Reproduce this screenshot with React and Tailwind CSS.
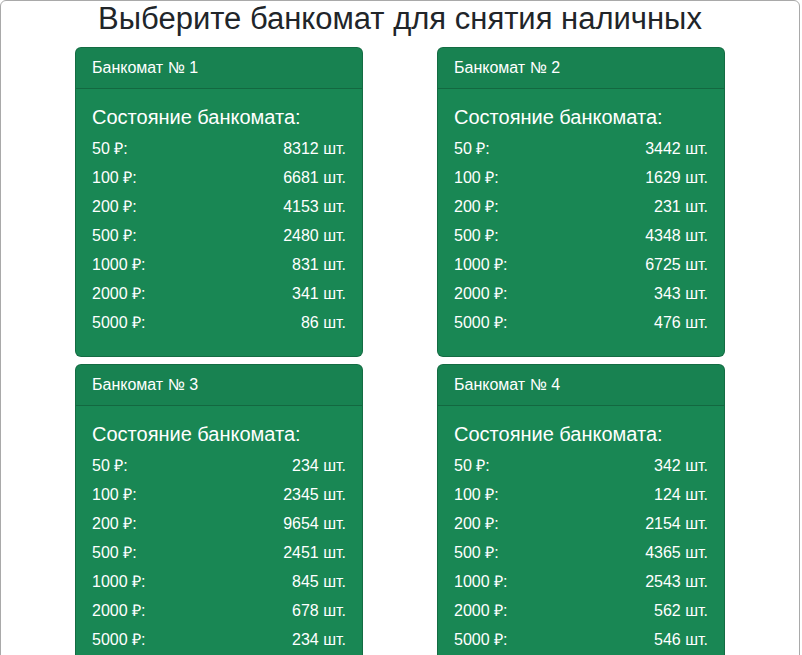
const atms = [
  { id: 1, notes: [8312, 6681, 4153, 2480, 831, 341, 86] },
  { id: 2, notes: [3442, 1629, 231, 4348, 6725, 343, 476] },
  { id: 3, notes: [234, 2345, 9654, 2451, 845, 678, 234] },
  { id: 4, notes: [342, 124, 2154, 4365, 2543, 562, 546] },
];

const nominals = [50, 100, 200, 500, 1000, 2000, 5000];

const AtmCard = ({ atm }) => (
  <div className="rounded-md border border-black/20 bg-[#198754] text-white overflow-hidden">
    {/* Header */}
    <div className="px-4 py-2 bg-black/[0.03] border-b border-black/20 text-base leading-6">
      Банкомат № {atm.id}
    </div>

    {/* Body */}
    <div className="p-4">
      <h5 className="text-[20px] leading-6 mb-2">Состояние банкомата:</h5>
      {nominals.map((n, i) => (
        <div key={n} className="flex justify-between text-base leading-6 mb-[5px]">
          <span>{n} ₽:</span>
          <span>{atm.notes[i]} шт.</span>
        </div>
      ))}
    </div>
  </div>
);

export default function App() {
  return (
    <div className="w-[800px] min-h-screen border border-[#a9a9a9] rounded-t-md bg-white font-['Liberation_Sans',Arial,sans-serif] text-[#212529]">
      <h1 className="text-[31px] leading-[36px] text-center mb-[10px]">
        Выберите банкомат для снятия наличных
      </h1>
      <div className="grid grid-cols-[288px_288px] justify-center gap-x-[74px] gap-y-[7px]">
        {atms.map((atm) => (
          <AtmCard key={atm.id} atm={atm} />
        ))}
      </div>
    </div>
  );
}
